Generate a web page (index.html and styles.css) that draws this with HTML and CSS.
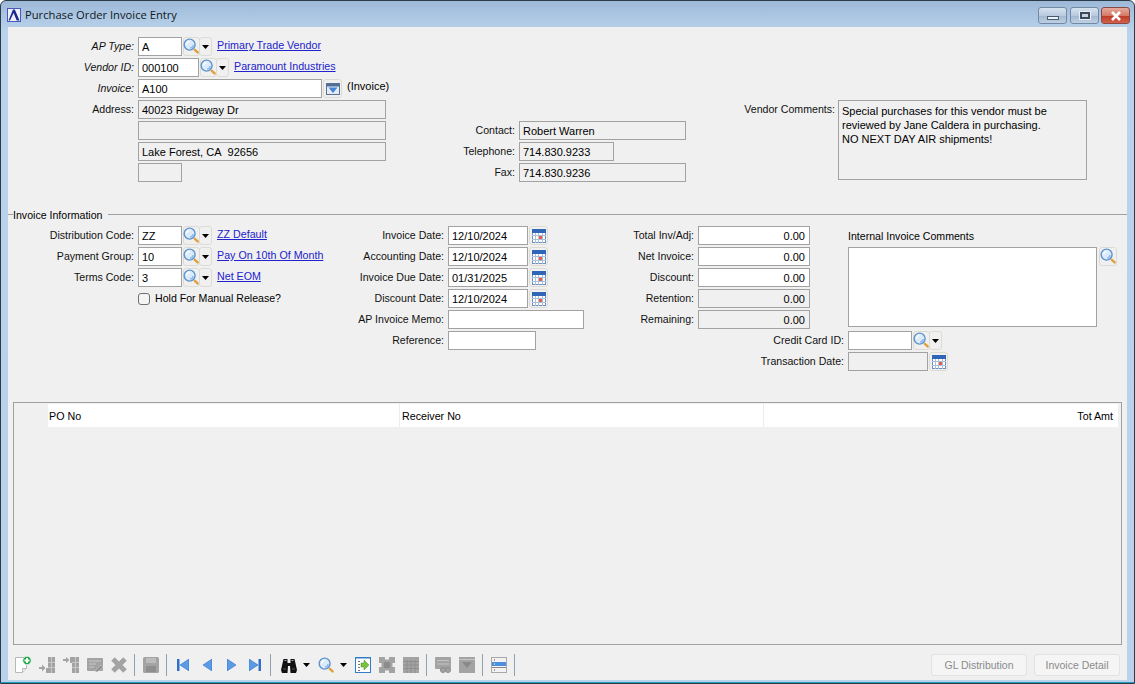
FILE: index.html
```html
<!DOCTYPE html>
<html lang="en">
<head>
  <meta charset="UTF-8">
  <title>Purchase Order Invoice Entry</title>
  <link rel="stylesheet" href="styles.css">
</head>
<body>
  <!-- shared icons -->
  <svg class="defs" width="0" height="0">
    <symbol id="i-search" viewBox="0 0 18 18">
      <circle cx="7" cy="7" r="5.800" fill="#dcebfb" stroke="#5f93cc" stroke-width="1.500"/>
      <path d="M3.800 7a3.200 3.200 0 0 1 3.200-3.200" fill="none" stroke="#fff" stroke-width="1.500"/>
      <path d="M7.500 10.700a3.700 3.700 0 0 0 3.200-3.200" fill="none" stroke="#8dbbec" stroke-width="1.600"/>
      <path d="M12.500 12.500l3 2.700" stroke="#e0a040" stroke-width="2.600" stroke-linecap="round"/>
    </symbol>
    <symbol id="i-cal" viewBox="0 0 14 14">
      <rect x=".5" y=".5" width="13" height="13" fill="#fff" stroke="#6f8fbc"/>
      <path d="M0 6.500h14M0 10.500h14M3.500 4v10M6.500 4v10M10.500 4v10" stroke="#a9bfdb"/>
      <rect x="0" y="0" width="14" height="4" fill="#2f66b8"/>
      <rect x="7" y="7" width="3" height="3" fill="#e8603a"/>
    </symbol>
    <symbol id="i-list" viewBox="0 0 14 12">
      <rect x=".5" y=".5" width="13" height="11" fill="#e4ebf4" stroke="#5a7191"/>
      <rect x="1" y="1" width="12" height="2.500" fill="#4f6f98"/>
      <path d="M2.500 4.500h9L7 10z" fill="#3f86d6"/>
    </symbol>
    <symbol id="i-caret" viewBox="0 0 7 4">
      <path d="M0 0h7L3.500 4z" fill="#000"/>
    </symbol>
  </svg>

  <div class="window">
    <div class="titlebar">
      <svg class="app-logo" width="14" height="14" viewBox="0 0 14 14">
        <rect x=".5" y=".5" width="13" height="13" fill="#eef0fb" stroke="#4a56c0"/>
        <path d="M1.500 12.500L6 1.500h1.800l4.700 11H9.700L6.600 5 3 12.500z" fill="#1b2a8a"/>
      </svg>
      <span class="title">Purchase Order Invoice Entry</span>
      <div class="win-buttons">
        <div class="win-btn"><span class="glyph-min"></span></div>
        <div class="win-btn"><span class="glyph-max"></span></div>
        <div class="win-btn close">
          <svg width="12" height="10" viewBox="0 0 12 10"><path d="M2 1l8 8M10 1l-8 8" stroke="#fff" stroke-width="2.600"/></svg>
        </div>
      </div>
    </div>

    <div class="content">
      <div class="top">
        <div class="col">
          <div class="row">
            <label class="lbl lbl-left em">AP Type:</label>
            <div class="field w44">A</div>
            <button class="btn-icon"><svg width="17" height="17"><use href="#i-search"/></svg></button>
            <button class="btn-drop"><svg width="7" height="4"><use href="#i-caret"/></svg></button>
            <a class="link">Primary Trade Vendor</a>
          </div>
          <div class="row">
            <label class="lbl lbl-left em">Vendor ID:</label>
            <div class="field w61">000100</div>
            <button class="btn-icon"><svg width="17" height="17"><use href="#i-search"/></svg></button>
            <button class="btn-drop"><svg width="7" height="4"><use href="#i-caret"/></svg></button>
            <a class="link">Paramount Industries</a>
          </div>
          <div class="row">
            <label class="lbl lbl-left em">Invoice:</label>
            <div class="field w184">A100</div>
            <button class="btn-icon btn-wide"><svg width="14" height="12"><use href="#i-list"/></svg></button>
            <span class="note">(Invoice)</span>
          </div>
          <div class="row">
            <label class="lbl lbl-left">Address:</label>
            <div class="field ro w248">40023 Ridgeway Dr</div>
          </div>
          <div class="row">
            <span class="lbl lbl-left"></span>
            <div class="field ro w248"></div>
          </div>
          <div class="row">
            <span class="lbl lbl-left"></span>
            <div class="field ro w248">Lake Forest, CA&nbsp; 92656</div>
          </div>
          <div class="row">
            <span class="lbl lbl-left"></span>
            <div class="field ro w44"></div>
          </div>
        </div>

        <div class="col contact">
          <div class="row">
            <label class="lbl lbl-contact">Contact:</label>
            <div class="field ro w167">Robert Warren</div>
          </div>
          <div class="row">
            <label class="lbl lbl-contact">Telephone:</label>
            <div class="field ro w95">714.830.9233</div>
          </div>
          <div class="row">
            <label class="lbl lbl-contact">Fax:</label>
            <div class="field ro w167">714.830.9236</div>
          </div>
        </div>

        <div class="col comments">
          <label class="lbl lbl-comments">Vendor Comments:</label>
          <div class="memo ro">Special purchases for this vendor must be<br>reviewed by Jane Caldera in purchasing.<br>NO NEXT DAY AIR shipments!</div>
        </div>
      </div>

      <div class="section-head"><span>Invoice Information</span></div>

      <div class="bottom">
        <div class="col">
          <div class="row">
            <label class="lbl lbl-left">Distribution Code:</label>
            <div class="field w44">ZZ</div>
            <button class="btn-icon"><svg width="17" height="17"><use href="#i-search"/></svg></button>
            <button class="btn-drop"><svg width="7" height="4"><use href="#i-caret"/></svg></button>
            <a class="link">ZZ Default</a>
          </div>
          <div class="row">
            <label class="lbl lbl-left">Payment Group:</label>
            <div class="field w44">10</div>
            <button class="btn-icon"><svg width="17" height="17"><use href="#i-search"/></svg></button>
            <button class="btn-drop"><svg width="7" height="4"><use href="#i-caret"/></svg></button>
            <a class="link">Pay On 10th Of Month</a>
          </div>
          <div class="row">
            <label class="lbl lbl-left">Terms Code:</label>
            <div class="field w44">3</div>
            <button class="btn-icon"><svg width="17" height="17"><use href="#i-search"/></svg></button>
            <button class="btn-drop"><svg width="7" height="4"><use href="#i-caret"/></svg></button>
            <a class="link">Net EOM</a>
          </div>
          <div class="row">
            <span class="lbl lbl-left"></span>
            <label class="check"><span class="box"></span>Hold For Manual Release?</label>
          </div>
        </div>

        <div class="col">
          <div class="row">
            <label class="lbl lbl-dates">Invoice Date:</label>
            <div class="field w80">12/10/2024</div>
            <button class="btn-icon btn-wide"><svg width="14" height="14"><use href="#i-cal"/></svg></button>
          </div>
          <div class="row">
            <label class="lbl lbl-dates">Accounting Date:</label>
            <div class="field w80">12/10/2024</div>
            <button class="btn-icon btn-wide"><svg width="14" height="14"><use href="#i-cal"/></svg></button>
          </div>
          <div class="row">
            <label class="lbl lbl-dates">Invoice Due Date:</label>
            <div class="field w80">01/31/2025</div>
            <button class="btn-icon btn-wide"><svg width="14" height="14"><use href="#i-cal"/></svg></button>
          </div>
          <div class="row">
            <label class="lbl lbl-dates">Discount Date:</label>
            <div class="field w80">12/10/2024</div>
            <button class="btn-icon btn-wide"><svg width="14" height="14"><use href="#i-cal"/></svg></button>
          </div>
          <div class="row">
            <label class="lbl lbl-dates">AP Invoice Memo:</label>
            <div class="field w136"></div>
          </div>
          <div class="row">
            <label class="lbl lbl-dates">Reference:</label>
            <div class="field w88"></div>
          </div>
        </div>

        <div class="col amounts">
          <div class="amounts-top">
            <div class="totals">
              <div class="row">
                <label class="lbl lbl-totals">Total Inv/Adj:</label>
                <div class="field num w112">0.00</div>
              </div>
              <div class="row">
                <label class="lbl lbl-totals">Net Invoice:</label>
                <div class="field num w112">0.00</div>
              </div>
              <div class="row">
                <label class="lbl lbl-totals">Discount:</label>
                <div class="field num w112">0.00</div>
              </div>
              <div class="row">
                <label class="lbl lbl-totals">Retention:</label>
                <div class="field ro num w112">0.00</div>
              </div>
              <div class="row">
                <label class="lbl lbl-totals">Remaining:</label>
                <div class="field ro num w112">0.00</div>
              </div>
            </div>
            <div class="internal">
              <div class="internal-label">Internal Invoice Comments</div>
              <div class="internal-body">
                <div class="memo-white"></div>
                <button class="btn-icon"><svg width="17" height="17"><use href="#i-search"/></svg></button>
              </div>
            </div>
          </div>
          <div class="row">
            <label class="lbl lbl-card">Credit Card ID:</label>
            <div class="field w64"></div>
            <button class="btn-icon"><svg width="17" height="17"><use href="#i-search"/></svg></button>
            <button class="btn-drop"><svg width="7" height="4"><use href="#i-caret"/></svg></button>
          </div>
          <div class="row">
            <label class="lbl lbl-card">Transaction Date:</label>
            <div class="field ro w80"></div>
            <button class="btn-icon btn-wide"><svg width="14" height="14"><use href="#i-cal"/></svg></button>
          </div>
        </div>
      </div>

      <div class="grid">
        <div class="grid-head">
          <div class="cell c-po">PO No</div>
          <div class="cell c-rec">Receiver No</div>
          <div class="cell c-amt">Tot Amt</div>
        </div>
      </div>

      <div class="toolbar">
        <div class="tb">
          <svg width="18" height="18" viewBox="0 0 18 18">
            <path d="M1.500 1.500h11v11l-4 4h-7z" fill="#fff" stroke="#b8b8b8"/>
            <path d="M8.500 16.500v-4h4" fill="#ececec" stroke="#b8b8b8"/>
            <circle cx="13" cy="4.500" r="4.200" fill="#1fa548" stroke="#e8f5ea" stroke-width=".8"/>
            <path d="M13 2v5M10.500 4.500h5" stroke="#fff" stroke-width="1.800"/>
          </svg>
        </div>
        <div class="tb">
          <svg width="16" height="16" viewBox="0 0 16 16" fill="#a3a3a3">
            <path d="M9 0h7v16H7v-5h2z"/>
            <path d="M0 10h3V7.500l3.500 3.500L3 14.500V12H0z"/>
            <path d="M9 5.500h7M9 10.500h7M12.500 0v16" stroke="#c8c8c8" fill="none"/>
          </svg>
        </div>
        <div class="tb">
          <svg width="16" height="16" viewBox="0 0 16 16" fill="#a3a3a3">
            <path d="M7 0h9v16H9V6H7z"/>
            <path d="M0 2h3V0l3.500 3L3 6V4H0z"/>
            <path d="M9 5.500h7M9 10.500h7M12.500 0v16" stroke="#c8c8c8" fill="none"/>
          </svg>
        </div>
        <div class="tb">
          <svg width="16" height="16" viewBox="0 0 16 16">
            <rect y="1" width="16" height="13" rx="1" fill="#a3a3a3"/>
            <path d="M2 4h12M2 7h7M2 10h5" stroke="#c8c8c8"/>
            <path d="M8 14l6-6 2 2-6 5z" fill="#8c8c8c" stroke="#d0d0d0" stroke-width=".6"/>
          </svg>
        </div>
        <div class="tb">
          <svg width="16" height="16" viewBox="0 0 16 16">
            <path d="M2 2l12 12M14 2L2 14" stroke="#a3a3a3" stroke-width="5"/>
          </svg>
        </div>
        <div class="sep"></div>
        <div class="tb">
          <svg width="16" height="16" viewBox="0 0 16 16">
            <rect width="16" height="16" rx="1.500" fill="#a3a3a3"/>
            <rect x="3" y="1" width="10" height="5" fill="#bcbcbc"/>
            <rect x="3" y="9" width="10" height="6" fill="#8e8e8e"/>
          </svg>
        </div>
        <div class="sep"></div>
        <div class="tb">
          <svg width="12" height="12" viewBox="0 0 12 12">
            <path d="M0 0h2.500v12H0z" fill="#2e6fc8"/><path d="M12 0v12L3 6z" fill="#5b9be6" stroke="#2e6fc8" stroke-width=".6"/>
          </svg>
        </div>
        <div class="tb">
          <svg width="9" height="12" viewBox="0 0 9 12"><path d="M9 0v12L0 6z" fill="#5b9be6" stroke="#2e6fc8" stroke-width=".6"/></svg>
        </div>
        <div class="tb">
          <svg width="9" height="12" viewBox="0 0 9 12"><path d="M0 0v12l9-6z" fill="#5b9be6" stroke="#2e6fc8" stroke-width=".6"/></svg>
        </div>
        <div class="tb">
          <svg width="12" height="12" viewBox="0 0 12 12">
            <path d="M9.500 0H12v12H9.500z" fill="#2e6fc8"/><path d="M0 0v12l9-6z" fill="#5b9be6" stroke="#2e6fc8" stroke-width=".6"/>
          </svg>
        </div>
        <div class="sep"></div>
        <div class="tb-group first">
          <div class="tb">
            <svg width="16" height="15" viewBox="0 0 16 15">
              <path d="M2.500 1h4v4h3V1h4L16 12l-1 3H9.500L9 8H7l-.5 7H1l-1-3z" fill="#111"/>
              <path d="M3.500 2.500h2M10.500 2.500h2" stroke="#8ab0d8"/>
              <path d="M2 11h3M11 11h3" stroke="#555"/>
            </svg>
          </div>
          <svg class="tb-caret" width="7" height="4"><use href="#i-caret"/></svg>
        </div>
        <div class="tb-group">
          <div class="tb"><svg width="17" height="17"><use href="#i-search"/></svg></div>
          <svg class="tb-caret" width="7" height="4"><use href="#i-caret"/></svg>
        </div>
        <div class="tb">
          <svg width="16" height="16" viewBox="0 0 16 16">
            <rect x=".5" y=".5" width="15" height="15" fill="#fff" stroke="#2f7fc8"/>
            <path d="M0 .5h16" stroke="#2f7fc8" stroke-width="2"/>
            <path d="M3 4.500h2M3 7.500h2M3 10.500h2M3 13.500h2" stroke="#777"/>
            <path d="M6 6h3V3l5 5-5 5v-3H6z" fill="#7cc142" stroke="#4f9422" stroke-width=".5"/>
          </svg>
        </div>
        <div class="tb">
          <svg width="16" height="16" viewBox="0 0 16 16" fill="#a3a3a3">
            <path d="M0 0h6v2.500h4V0h6v6h-2.500v4H16v6h-6v-2.500H6V16H0v-6h2.500V6H0z"/>
            <path d="M5 5h6v6H5z" fill="#8c8c8c"/>
          </svg>
        </div>
        <div class="tb">
          <svg width="16" height="16" viewBox="0 0 16 16">
            <rect width="16" height="16" fill="#a3a3a3"/>
            <path d="M0 4.500h16M0 8h16M0 11.500h16M4 3v13M8 3v13M12 3v13" stroke="#8e8e8e"/>
          </svg>
        </div>
        <div class="sep"></div>
        <div class="tb">
          <svg width="16" height="16" viewBox="0 0 16 16">
            <rect y="0" width="16" height="12" rx="1" fill="#a3a3a3"/>
            <path d="M2 3.500h12M2 7h12" stroke="#c4c4c4"/>
            <circle cx="8" cy="13" r="2.500" fill="#a3a3a3" stroke="#8a8a8a"/>
            <circle cx="13" cy="13" r="2.500" fill="#a3a3a3" stroke="#8a8a8a"/>
          </svg>
        </div>
        <div class="tb">
          <svg width="16" height="16" viewBox="0 0 16 16">
            <rect width="16" height="16" fill="#a3a3a3"/>
            <path d="M3 5h10l-5 6z" fill="#8a8a8a"/>
            <path d="M0 2.500h16" stroke="#c6c6c6"/>
          </svg>
        </div>
        <div class="sep"></div>
        <div class="tb">
          <svg width="16" height="16" viewBox="0 0 16 16">
            <rect x=".5" y=".5" width="15" height="15" fill="#f2f2f2" stroke="#a8a8a8"/>
            <rect x="1" y="5" width="14" height="4" fill="#4d8fdc"/>
            <path d="M1 10.500h14" stroke="#888"/>
            <path d="M3 3h1M3 13h1" stroke="#444"/>
            <path d="M3 7h1" stroke="#fff"/>
          </svg>
        </div>
        <div class="sep"></div>
        <div class="tb-right">
          <button class="action">GL Distribution</button>
          <button class="action">Invoice Detail</button>
        </div>
      </div>
    </div>
  </div>
</body>
</html>
```

FILE: styles.css
```css
html, body {
  margin: 0;
  height: 100%;
  background: #fff;
  overflow: hidden;
}

body {
  font-family: "Liberation Sans", Arial, sans-serif;
  font-size: 10.600px;
  color: #000;
}

.defs {
  display: block;
  height: 0;
}

.window {
  display: flex;
  flex-direction: column;
  box-sizing: border-box;
  width: 1135px;
  height: 684px;
  padding: 0 7px 3px;
  background: linear-gradient(180deg, #9db9d8 0, #bad3ec 30px, #b8d2ec 100%);
  border: 1px solid #2c3a4a;
  box-shadow: inset 0 -1px 0 #1f9cb8;
  border-radius: 6px 6px 0 0;
}

.titlebar {
  display: flex;
  align-items: center;
  height: 26px;
  flex: none;
}

.app-logo {
  margin: 1px 4px 0 -1px;
}

.title {
  font-family: "Open Sans", sans-serif;
  font-size: 11.200px;
  color: #101820;
}

.win-buttons {
  display: flex;
  gap: 2px;
  margin-left: auto;
  align-self: flex-start;
  margin-top: 6px;
  margin-right: -3px;
}

.win-btn {
  display: flex;
  align-items: center;
  justify-content: center;
  box-sizing: border-box;
  width: 29px;
  height: 17px;
  border: 1px solid #7388a4;
  border-radius: 3px;
  background: linear-gradient(180deg, #d6e2ef 0, #b9cade 50%, #a2b7cf 52%, #bed0e3 100%);
}

.win-btn:first-child {
  margin-right: 1px;
}

.win-btn.close {
  border-color: #8a4a44;
  background: linear-gradient(180deg, #e6aa9c 0, #d67a68 50%, #bb3a26 52%, #d4604a 100%);
}

.glyph-min {
  display: block;
  width: 10px;
  height: 2px;
  margin-top: 5px;
  background: #eef2f6;
  border: 1px solid #4a5a6e;
}

.glyph-max {
  display: block;
  width: 6px;
  height: 3px;
  background: #c6d4e4;
  border: 2px solid #3c4a5c;
  box-shadow: 0 0 0 1px #e8edf3;
}

.content {
  display: flex;
  flex-direction: column;
  flex: 1;
  min-height: 0;
  padding-top: 10px;
  background: #f0f0f0;
}

.top {
  display: grid;
  grid-template-columns: 392px 322px 1fr;
  height: 144px;
  margin-bottom: 27px;
  flex: none;
}

.bottom {
  display: grid;
  grid-template-columns: 332px 260px 1fr;
  height: 145px;
  margin-bottom: 31px;
  flex: none;
}

.row {
  display: flex;
  align-items: center;
  height: 19px;
  margin-bottom: 2px;
  white-space: nowrap;
}

.lbl {
  box-sizing: border-box;
  flex: none;
  margin-right: 4px;
  padding-bottom: 2px;
  text-align: right;
  color: #111;
}

.em {
  font-style: italic;
}

.lbl-left { width: 126px; }
.lbl-contact { width: 115px; }
.lbl-dates { width: 104px; }
.lbl-totals { width: 94px; }
.lbl-card { width: 244px; }

.contact {
  padding-top: 84px;
}

.comments {
  display: flex;
  align-items: flex-start;
  padding-top: 63px;
}

.lbl-comments {
  width: 113px;
  margin-right: 3px;
  padding-top: 3px;
}

.field {
  box-sizing: border-box;
  flex: none;
  height: 19px;
  padding: 2px 3px 0;
  font-size: 11px;
  line-height: 15px;
  background: #fff;
  border: 1px solid #a2a2a2;
  overflow: hidden;
}

.ro {
  background: transparent;
}

.num {
  text-align: right;
  padding-right: 4px;
}

.w44 { width: 44px; }
.w61 { width: 61px; }
.w64 { width: 64px; }
.w80 { width: 80px; }
.w88 { width: 88px; }
.w95 { width: 95px; }
.w112 { width: 112px; }
.w136 { width: 136px; }
.w167 { width: 167px; }
.w184 { width: 184px; }
.w248 { width: 248px; }

.btn-icon,
.btn-drop {
  display: flex;
  align-items: center;
  justify-content: center;
  box-sizing: border-box;
  flex: none;
  height: 19px;
  padding: 0;
  background: #f0f0f0;
  border: 1px solid #dcdcd4;
  border-radius: 3px;
}

.btn-icon {
  width: 17px;
  margin-left: 1px;
}

.btn-icon svg {
  overflow: visible;
  flex: none;
}

.btn-wide {
  width: 19px;
}

.btn-drop {
  width: 13px;
  margin-left: -1px;
}

.link {
  margin-left: 5px;
  padding-bottom: 3px;
  font-size: 10.700px;
  color: #2222cc;
  text-decoration: underline;
}

.note {
  margin-left: 5px;
  padding-bottom: 5px;
  font-size: 11px;
}

.memo {
  box-sizing: border-box;
  width: 249px;
  height: 80px;
  padding: 3px 3px;
  font-size: 11px;
  line-height: 14px;
  border: 1px solid #a2a2a2;
}

.section-head {
  display: flex;
  align-items: center;
  flex: none;
  height: 13px;
  margin-bottom: 5px;
}

.section-head::before {
  content: "";
  width: 5px;
  height: 1px;
  background: #a0a0a0;
}

.section-head::after {
  content: "";
  flex: 1;
  height: 1px;
  margin-left: 5px;
  background: #a0a0a0;
}

.check {
  display: flex;
  align-items: center;
  gap: 5px;
  padding-bottom: 3px;
  margin-top: 1px;
}

.box {
  display: block;
  box-sizing: border-box;
  width: 12px;
  height: 12px;
  margin-top: 2px;
  border: 1px solid #707070;
  border-radius: 3px;
  background: #f4f4f4;
}

.amounts-top {
  display: flex;
  height: 105px;
}

.totals {
  width: 248px;
  flex: none;
}

.internal-label {
  height: 21px;
  line-height: 20px;
}

.internal-body {
  display: flex;
  align-items: flex-start;
}

.memo-white {
  box-sizing: border-box;
  width: 249px;
  height: 80px;
  background: #fff;
  border: 1px solid #a2a2a2;
}

.internal-body .btn-icon {
  width: 18px;
  margin-left: 2px;
}

.grid {
  flex: none;
  box-sizing: border-box;
  height: 243px;
  margin: 0 5px;
  padding: 1px 3px 0 34px;
  border: 1px solid #a0a0a0;
}

.grid-head {
  display: flex;
  height: 23px;
  background: #fff;
}

.cell {
  box-sizing: border-box;
  padding: 0 2px 0 1px;
  line-height: 24px;
  font-size: 10.700px;
  border-right: 1px solid #ececec;
}

.c-po { width: 352px; }
.c-rec { width: 364px; padding-left: 2px; }

.c-amt {
  flex: 1;
  padding-right: 5px;
  text-align: right;
  border-right: 0;
}

.toolbar {
  display: flex;
  align-items: center;
  flex: 1;
  padding: 5px 7px 0 3px;
  min-height: 0;
}

.tb {
  display: flex;
  align-items: center;
  justify-content: center;
  flex: none;
  width: 24px;
  height: 24px;
}

.tb-group {
  display: flex;
  align-items: center;
  flex: none;
  width: 37px;
}

.tb-group.first {
  margin-left: 2px;
}

.tb-caret {
  margin-left: 2px;
}

.sep {
  flex: none;
  width: 1px;
  height: 22px;
  margin: 0 4px 0 3px;
  background: #8fa0b0;
}

.tb-right {
  display: flex;
  gap: 7px;
  margin-left: auto;
}

.action {
  box-sizing: border-box;
  height: 22px;
  padding: 0;
  font: 10.500px "Liberation Sans", Arial, sans-serif;
  color: #8a8a8a;
  background: #f5f5f5;
  border: 1px solid #e2e2e2;
  border-radius: 3px;
}

.action:first-child { width: 96px; }
.action:last-child { width: 86px; }
```
